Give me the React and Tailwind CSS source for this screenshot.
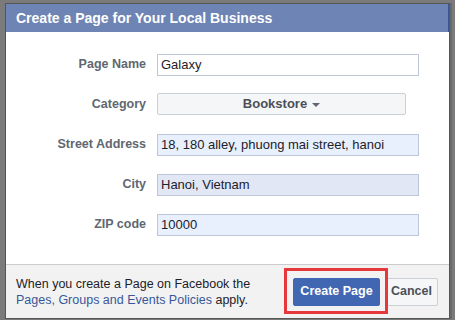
import React from "react";

const font = { fontFamily: '"Liberation Sans", Arial, sans-serif' };

const Field = ({ label, children }) => (
  <div className="flex items-center h-[22px]">
    <label className="w-[140px] text-right text-[12.5px] font-bold text-[#606770]">{label}</label>
    <div className="ml-[11px]">{children}</div>
  </div>
);

const inputCls =
  "h-[22px] w-[262px] border border-[#bdc7d8] px-[3px] text-[13px] text-[#1d2129] outline-none";

const App = () => {
  return (
    <div className="w-[455px] h-[320px] bg-[#7b7b7b] pl-[5px] pt-[3px] overflow-hidden" style={font}>
      <div className="w-[445px] border border-[#555] bg-white shadow-[2px_0_0_#6a6a6a]">
        <div className="h-[28px] bg-[#6d84b4] border-r border-[#3b5998] flex items-center px-[10px]">
          <h1 className="text-[14px] font-bold text-white">Create a Page for Your Local Business</h1>
        </div>

        <div className="flex flex-col gap-[18px] pt-[21px] pb-[29px]">
          <Field label="Page Name">
            <input className={`${inputCls} bg-white`} defaultValue="Galaxy" />
          </Field>
          <Field label="Category">
            <button className="h-[22px] w-[249px] border border-[#ccd0d5] bg-[#f5f6f7] rounded-[2px] flex items-center justify-center gap-[5px] text-[13px] font-bold text-[#4b4f56]">
              Bookstore
              <span className="w-0 h-0 border-l-[4px] border-r-[4px] border-t-[4px] border-l-transparent border-r-transparent border-t-[#606770] mt-[1px]" />
            </button>
          </Field>
          <Field label="Street Address">
            <input className={`${inputCls} bg-[#e8f0fe]`} defaultValue="18, 180 alley, phuong mai street, hanoi" />
          </Field>
          <Field label="City">
            <input className={`${inputCls} bg-[#e1e7f5]`} defaultValue="Hanoi, Vietnam" />
          </Field>
          <Field label="ZIP code">
            <input className={`${inputCls} bg-[#e8f0fe]`} defaultValue="10000" />
          </Field>
        </div>

        <div className="h-[54px] border-t border-[#ccc] bg-[#f2f2f2] flex items-center pl-[10px] pr-[11px]">
          <p className="flex-1 text-[12.5px] leading-[16px] text-[#1d2129]">
            When you create a Page on Facebook the
            <br />
            <a className="text-[#365899]">Pages, Groups and Events Policies</a> apply.
          </p>
          <div className="relative">
            <button className="h-[28px] w-[87px] bg-[#4267b2] border border-[#4267b2] rounded-[2px] text-[12.5px] font-bold text-white">
              Create Page
            </button>
            <div className="absolute -left-[9px] -top-[10px] -right-[8px] -bottom-[8px] border-[3px] border-[#e5373c] pointer-events-none" />
          </div>
          <button className="ml-[5px] h-[28px] w-[53px] bg-[#f5f6f7] border border-[#ccd0d5] rounded-[2px] text-[12.5px] font-bold text-[#4b4f56]">
            Cancel
          </button>
        </div>
      </div>
    </div>
  );
};

export default App;
